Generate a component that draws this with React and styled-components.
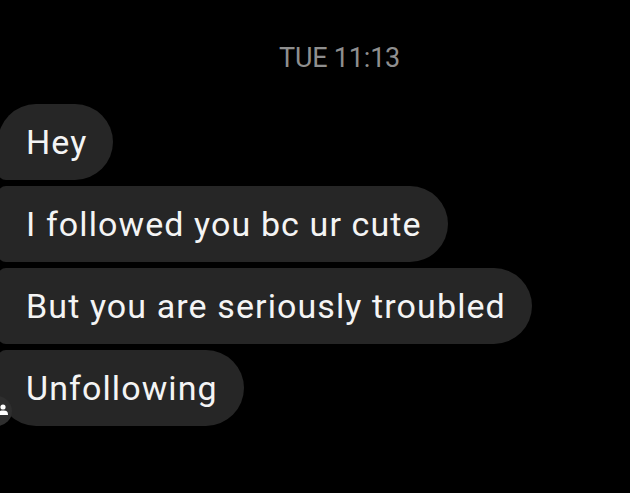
import React from "react";
import styled, { createGlobalStyle } from "styled-components";

const Global = createGlobalStyle`
  html, body { margin: 0; padding: 0; background: #000; }
  body { width: 630px; height: 493px; overflow: hidden; }
`;

const Screen = styled.div`
  width: 630px;
  height: 493px;
  background: #000;
  font-family: Roboto, "Liberation Sans", sans-serif;
  overflow: hidden;
  position: relative;
`;

const Stamp = styled.div`
  padding: 42px 0 0 279px;
  height: 64px;
  box-sizing: border-box;
  color: #8f8f8f;
  font-size: 27px;
  line-height: 32px;
  letter-spacing: -0.2px;
`;

const Thread = styled.div`
  display: flex;
  flex-direction: column;
  align-items: flex-start;
  gap: 6px;
  margin-top: 40px;
  margin-left: -2px;
  position: relative;
`;

const Bubble = styled.div`
  background: #262626;
  color: #f4f4f4;
  height: 76px;
  display: flex;
  align-items: center;
  padding: 0 26px 0 28px;
  box-sizing: border-box;
  font-size: 34px;
  letter-spacing: 1.1px;
  white-space: nowrap;
  border-radius: ${(p) => (p.$first ? "38px" : "8px")} 38px 38px
    ${(p) => (p.$last ? "38px" : "8px")};
`;

const Avatar = styled.div`
  position: absolute;
  left: -16px;
  bottom: 0;
  width: 30px;
  height: 30px;
  border-radius: 50%;
  background: #2e2e2e;
  display: flex;
  align-items: center;
  justify-content: flex-end;
  padding-right: 4px;
  box-sizing: border-box;
  padding-bottom: 4px;
`;

const messages = [
  "Hey",
  "I followed you bc ur cute",
  "But you are seriously troubled",
  "Unfollowing",
];

export default function App() {
  return (
    <Screen>
      <Global />
      <Stamp>TUE 11:13</Stamp>
      <Thread>
        {messages.map((m, i) => (
          <Bubble key={i} $first={i === 0} $last={i === messages.length - 1}>
            {m}
          </Bubble>
        ))}
        <Avatar>
          <svg width="10" height="11" viewBox="0 0 10 11">
            <circle cx="5" cy="3" r="2.6" fill="#fff" />
            <path d="M0 11 C0 7 2 6.5 5 6.5 C8 6.5 10 7 10 11 Z" fill="#fff" />
          </svg>
        </Avatar>
      </Thread>
    </Screen>
  );
}
